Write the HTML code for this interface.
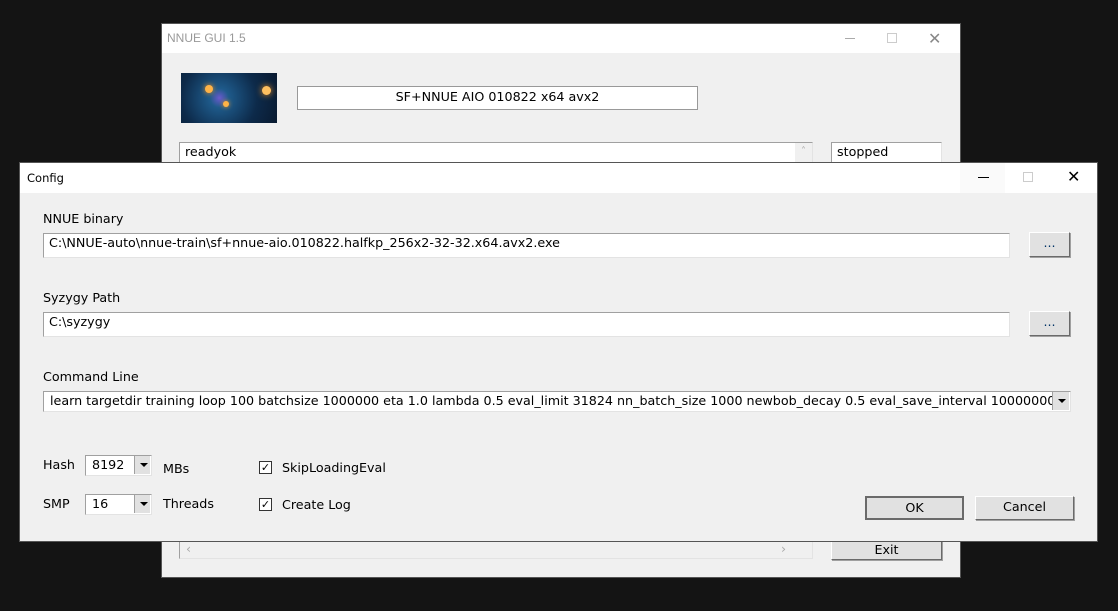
<!DOCTYPE html>
<html><head><meta charset="utf-8"><style>
*{box-sizing:border-box;margin:0;padding:0}
body{width:1118px;height:611px;background:#141414;position:relative;overflow:hidden;font-family:"DejaVu Sans","Liberation Sans",sans-serif;font-size:12.7px;color:#000}
.abs{position:absolute}
.win{background:#f0f0f0}
.tb{background:#fff}
.field{background:#fff;border:1px solid #a0a0a0;border-bottom-color:#e3e3e3;border-right-color:#e3e3e3;white-space:nowrap;overflow:hidden}
.btn{background:#e1e1e1;border:1px solid #fff;border-right-color:#6a6a6a;border-bottom-color:#6a6a6a;box-shadow:1px 1px 0 #a0a0a0;text-align:center}
.arr{background:#e1e1e1;border-left:1px solid #a0a0a0;}
.arr:after{content:"";position:absolute;left:5px;top:7px;border:4px solid transparent;border-top:4px solid #000;border-bottom:0}
.cb{width:13px;height:13px;background:#fff;border:1px solid #333;font-size:11px;line-height:11px;text-align:center}
</style></head><body>
<div class="abs win" style="left:161px;top:23px;width:800px;height:555px;border:1px solid #555"></div>
<div class="abs tb" style="left:162px;top:24px;width:798px;height:29px"></div>
<div class="abs" style="left:167px;top:31px;color:#999;font-family:'Liberation Sans';font-size:12px">NNUE GUI 1.5</div>
<div class="abs" style="left:845px;top:38px;width:10px;height:1px;background:#aaa"></div>
<div class="abs" style="left:887px;top:33px;width:10px;height:10px;border:1px solid #ccc"></div>
<div class="abs" style="left:928px;top:29px;color:#888;font-size:16px;font-family:'Liberation Sans'">✕</div>
<div class="abs" style="left:181px;top:73px;width:96px;height:50px;background:radial-gradient(circle at 40% 50%,#6a5acd 0,#1e5a8a 15%,#0d2a4a 60%,#091a30 100%)"></div>
<div class="abs" style="left:205px;top:85px;width:8px;height:8px;border-radius:50%;background:#ffb347;box-shadow:0 0 6px #ff9a20"></div>
<div class="abs" style="left:223px;top:101px;width:6px;height:6px;border-radius:50%;background:#ffb347;box-shadow:0 0 5px #ff9a20"></div>
<div class="abs" style="left:262px;top:86px;width:9px;height:9px;border-radius:50%;background:#ffc060;box-shadow:0 0 7px #ff9a20"></div>
<div class="abs field" style="left:297px;top:86px;width:401px;height:24px;text-align:center;line-height:20px;border-color:#999">SF+NNUE AIO 010822 x64 avx2</div>
<div class="abs field" style="left:179px;top:142px;width:634px;height:22px;padding-left:5px;line-height:18px">readyok</div>
<div class="abs" style="left:795px;top:143px;width:17px;height:20px;background:#f0f0f0;color:#aaa;font-size:10px;text-align:center;line-height:18px">˄</div>
<div class="abs field" style="left:831px;top:142px;width:111px;height:22px;padding-left:5px;line-height:18px">stopped</div>
<div class="abs field" style="left:179px;top:541px;width:634px;height:18px;background:#f0f0f0;color:#aaa;padding-left:6px;line-height:14px">‹<span style="position:absolute;left:601px">›</span></div>
<div class="abs btn" style="left:831px;top:541px;width:111px;height:19px;line-height:16px">Exit</div>

<div class="abs win" style="left:19px;top:162px;width:1079px;height:380px;border:1px solid #555"></div>
<div class="abs tb" style="left:20px;top:163px;width:1077px;height:30px"></div>
<div class="abs" style="left:27px;top:171px;font-size:11.5px">Config</div>
<div class="abs" style="left:960px;top:163px;width:45px;height:30px;background:#fafafa"></div>
<div class="abs" style="left:978px;top:177px;width:11px;height:1px;background:#000"></div>
<div class="abs" style="left:1023px;top:172px;width:10px;height:10px;border:1px solid #ccc"></div>
<div class="abs" style="left:1067px;top:167px;font-size:16px;font-family:'Liberation Sans'">✕</div>

<div class="abs" style="left:43px;top:211px">NNUE binary</div>
<div class="abs field" style="left:43px;top:233px;width:967px;height:25px;padding-left:5px;line-height:18px">C:\NNUE-auto\nnue-train\sf+nnue-aio.010822.halfkp_256x2-32-32.x64.avx2.exe</div>
<div class="abs btn" style="left:1029px;top:232px;width:41px;height:25px;line-height:20px;color:#036">...</div>
<div class="abs" style="left:43px;top:290px">Syzygy Path</div>
<div class="abs field" style="left:43px;top:312px;width:967px;height:25px;padding-left:5px;line-height:18px">C:\syzygy</div>
<div class="abs btn" style="left:1029px;top:311px;width:41px;height:25px;line-height:20px;color:#036">...</div>
<div class="abs" style="left:43px;top:369px">Command Line</div>
<div class="abs field" style="left:43px;top:391px;width:1028px;height:21px;padding-left:6px;line-height:18px;padding-right:18px">learn targetdir training loop 100 batchsize 1000000 eta 1.0 lambda 0.5 eval_limit 31824 nn_batch_size 1000 newbob_decay 0.5 eval_save_interval 10000000</div>
<div class="abs arr" style="left:1052px;top:392px;width:17px;height:18px"></div>

<div class="abs" style="left:43px;top:457px">Hash</div>
<div class="abs field" style="left:85px;top:455px;width:67px;height:21px;padding-left:6px;line-height:18px">8192</div>
<div class="abs arr" style="left:134px;top:456px;width:16px;height:18px"></div>
<div class="abs" style="left:163px;top:461px">MBs</div>
<div class="abs" style="left:43px;top:496px">SMP</div>
<div class="abs field" style="left:85px;top:494px;width:67px;height:21px;padding-left:6px;line-height:18px">16</div>
<div class="abs arr" style="left:134px;top:495px;width:16px;height:18px"></div>
<div class="abs" style="left:163px;top:496px">Threads</div>
<div class="abs cb" style="left:259px;top:461px">✓</div>
<div class="abs" style="left:282px;top:460px">SkipLoadingEval</div>
<div class="abs cb" style="left:259px;top:498px">✓</div>
<div class="abs" style="left:282px;top:497px">Create Log</div>
<div class="abs btn" style="left:865px;top:496px;width:99px;height:24px;line-height:20px;border:2px solid #6a6a6a;box-shadow:none">OK</div>
<div class="abs btn" style="left:975px;top:496px;width:99px;height:24px;line-height:20px">Cancel</div>
</body></html>
